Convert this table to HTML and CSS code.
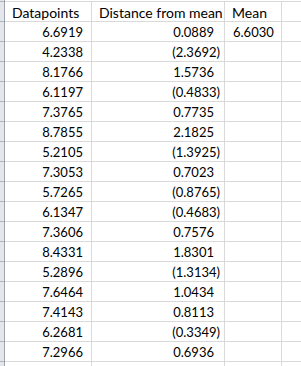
FILE: index.html
```html
<!DOCTYPE html>
<html>
<head>
<meta charset="utf-8">
<link rel="stylesheet" href="styles.css">
</head>
<body>
<div class="sheet">
  <div class="rowhead"></div>
  <div class="grid">
    <div class="cell hd">Datapoints</div>
    <div class="cell hd">Distance from mean</div>
    <div class="cell hd">Mean</div>
    <div class="cell"></div>

    <div class="cell a">6.6919</div><div class="cell b pos">0.0889</div><div class="cell c">6.6030</div><div class="cell"></div>
    <div class="cell a">4.2338</div><div class="cell b">(2.3692)</div><div class="cell"></div><div class="cell"></div>
    <div class="cell a">8.1766</div><div class="cell b pos">1.5736</div><div class="cell"></div><div class="cell"></div>
    <div class="cell a">6.1197</div><div class="cell b">(0.4833)</div><div class="cell"></div><div class="cell"></div>
    <div class="cell a">7.3765</div><div class="cell b pos">0.7735</div><div class="cell"></div><div class="cell"></div>
    <div class="cell a">8.7855</div><div class="cell b pos">2.1825</div><div class="cell"></div><div class="cell"></div>
    <div class="cell a">5.2105</div><div class="cell b">(1.3925)</div><div class="cell"></div><div class="cell"></div>
    <div class="cell a">7.3053</div><div class="cell b pos">0.7023</div><div class="cell"></div><div class="cell"></div>
    <div class="cell a">5.7265</div><div class="cell b">(0.8765)</div><div class="cell"></div><div class="cell"></div>
    <div class="cell a">6.1347</div><div class="cell b">(0.4683)</div><div class="cell"></div><div class="cell"></div>
    <div class="cell a">7.3606</div><div class="cell b pos">0.7576</div><div class="cell"></div><div class="cell"></div>
    <div class="cell a">8.4331</div><div class="cell b pos">1.8301</div><div class="cell"></div><div class="cell"></div>
    <div class="cell a">5.2896</div><div class="cell b">(1.3134)</div><div class="cell"></div><div class="cell"></div>
    <div class="cell a">7.6464</div><div class="cell b pos">1.0434</div><div class="cell"></div><div class="cell"></div>
    <div class="cell a">7.4143</div><div class="cell b pos">0.8113</div><div class="cell"></div><div class="cell"></div>
    <div class="cell a">6.2681</div><div class="cell b">(0.3349)</div><div class="cell"></div><div class="cell"></div>
    <div class="cell a">7.2966</div><div class="cell b pos">0.6936</div><div class="cell"></div><div class="cell"></div>
    <div class="cell"></div><div class="cell"></div><div class="cell"></div><div class="cell"></div>
  </div>
</div>
</body>
</html>
```
FILE: styles.css
```css
html, body {
  margin: 0;
  padding: 0;
  background: #ffffff;
  overflow: hidden;
}
.sheet {
  display: flex;
  width: 301px;
  height: 366px;
  overflow: hidden;
  font-family: Lato, "Liberation Sans", sans-serif;
  color: #000000;
}
.rowhead {
  flex: 0 0 4px;
  height: 366px;
  border-right: 1px solid #9ea5ae;
  background-color: #e3e7ec;
  background-image: repeating-linear-gradient(to bottom, #aeb5be 0 1px, transparent 1px 20px);
  background-position: 0 1px;
}
.grid {
  flex: 1;
  margin-top: 1px;
  display: grid;
  grid-template-columns: 86px 132px 56px 1fr;
  grid-auto-rows: 19px;
  gap: 1px;
  background: #d9d9d9;
  border-top: 1px solid #d9d9d9;
  align-content: start;
  height: 400px;
}
.cell {
  background: #ffffff;
  font-size: 13px;
  line-height: 17px;
  padding-top: 2px;
  white-space: nowrap;
  overflow: visible;
}
.hd {
  font-size: 14px;
  padding-left: 7px;
}
.a {
  text-align: right;
  padding-right: 8px;
}
.b {
  text-align: right;
  padding-right: 4px;
}
.b.pos {
  padding-right: 10px;
}
.c {
  padding-left: 8px;
}
```
